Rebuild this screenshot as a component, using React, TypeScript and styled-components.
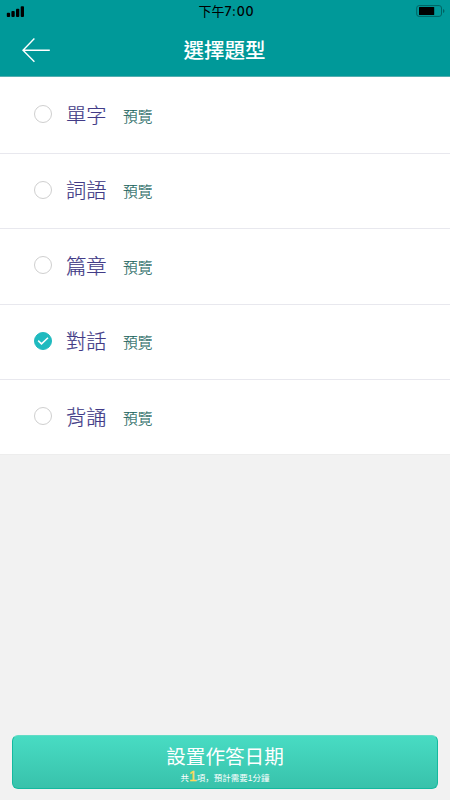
import React, { useState } from "react";
import styled, { createGlobalStyle } from "styled-components";

const GlobalStyle = createGlobalStyle`
  * { box-sizing: border-box; }
  body { margin: 0; background: #f2f2f2; }
  button { font: inherit; border: 0; padding: 0; background: none; cursor: pointer; }
`;

const Screen = styled.main`
  display: flex;
  flex-direction: column;
  height: 800px;
  width: 450px;
  background: #f2f2f2;
  font-family: "Noto Sans CJK TC", sans-serif;
`;

const Header = styled.header`
  flex: none;
  height: 77px;
  background: #009999;
  border-bottom: 1px solid #53aeb0;
`;

const StatusBar = styled.div`
  display: grid;
  grid-template-columns: 1fr auto 1fr;
  align-items: center;
  height: 23px;
  padding: 0 5px 0 6px;
  color: #000;
`;

const Clock = styled.time`
  margin-left: 2px;
  font-size: 13px;
  font-weight: 400;
  line-height: 22px;
  white-space: nowrap;
`;

const Digits = styled.span`
  font-family: "Inter", sans-serif;
  font-size: 12.5px;
  font-weight: 500;
  letter-spacing: 0.8px;
`;

const SignalIcon = styled.svg`
  display: block;
  width: 19px;
  height: 13px;
  margin-bottom: 2px;
`;

const BatteryIcon = styled.svg`
  display: block;
  justify-self: end;
  width: 29px;
  height: 12px;
  margin-bottom: 1px;
`;

const TitleBar = styled.div`
  display: grid;
  grid-template-columns: 60px 1fr 60px;
  align-items: center;
  height: 54px;
`;

const BackButton = styled.button`
  display: block;
  width: 30px;
  height: 26px;
  margin-left: 21px;

  svg { display: block; }
`;

const Title = styled.h1`
  margin: 0 1px 2px 0;
  color: #fff;
  font-size: 20.5px;
  font-weight: 500;
  line-height: 30px;
  text-align: center;
`;

const OptionList = styled.ul`
  flex: none;
  margin: 0;
  padding: 1.2px 0 0;
  background: #fff;
  list-style: none;
`;

const OptionRow = styled.li`
  display: flex;
  align-items: center;
  height: 75.45px;
  padding: 0 0 2px 34px;
  border-bottom: 1px solid #e8e8ee;

  &:last-child { border-bottom-color: #ededed; }
`;

const Radio = styled.button<{ $selected: boolean }>`
  display: grid;
  place-items: center;
  width: 18px;
  height: 18px;
  border-radius: 50%;
  border: 1px solid ${(p) => (p.$selected ? "#1fbabf" : "#cfcfcf")};
  background: ${(p) => (p.$selected ? "#1fbabf" : "#fff")};
`;

const OptionName = styled.span`
  margin: 0 0 1px 14px;
  width: 57px;
  color: #423b87;
  font-size: 20.3px;
  font-weight: 300;
  line-height: 30px;
  -webkit-text-stroke: 0.2px currentColor;
`;

const Preview = styled.button`
  color: #20645d;
  font-size: 14.7px;
  font-weight: 300;
  line-height: 22px;
  margin-top: 3px;
  -webkit-text-stroke: 0.15px currentColor;
`;

const Footer = styled.footer`
  margin-top: auto;
  padding: 0 12px 11px;
`;

const SubmitButton = styled.button`
  display: flex;
  flex-direction: column;
  align-items: center;
  width: 100%;
  height: 54px;
  padding-top: 5px;
  border: 1px solid #14b99f;
  border-top-color: #62dcc5;
  border-radius: 6px;
  background: linear-gradient(#48dcc3, #38c2ab);
  color: #fff;
`;

const SubmitLabel = styled.span`
  font-size: 19.6px;
  line-height: 29px;
`;

const SubmitHint = styled.span`
  display: flex;
  align-items: baseline;
  height: 14px;
  margin-top: -1px;
  font-family: "Liberation Sans", "Noto Sans CJK SC", sans-serif;
  font-size: 8.5px;
  line-height: 14px;
`;

const Count = styled.span`
  color: #ffd958;
  font-size: 14px;
  -webkit-text-stroke: 0.4px currentColor;
`;

const options = ["單字", "詞語", "篇章", "對話", "背誦"];

export default function App() {
  const [selected, setSelected] = useState("對話");

  return (
    <Screen>
      <GlobalStyle />
      <Header>
        <StatusBar>
          <SignalIcon viewBox="0 0 19 13">
            <rect x="0.8" y="8.8" width="3.3" height="4.2" rx="0.9" />
            <rect x="5.4" y="7" width="3.3" height="6" rx="0.9" />
            <rect x="10" y="4.7" width="3.3" height="8.3" rx="0.9" />
            <rect x="14.7" y="2.2" width="3.3" height="10.8" rx="0.9" />
          </SignalIcon>
          <Clock>下午<Digits>7:00</Digits></Clock>
          <BatteryIcon viewBox="0 0 29 12">
            <rect x="0.7" y="0.6" width="24.8" height="10.8" rx="2.4" fill="none" stroke="#006363" strokeWidth="1" />
            <rect x="3" y="2" width="15.2" height="8" rx="0.5" />
            <path d="M27 4 Q28.5 4.4 28.5 6 T27 8 Z" fill="#006363" />
          </BatteryIcon>
        </StatusBar>
        <TitleBar>
          <BackButton aria-label="返回">
            <svg width="30" height="26" viewBox="0 0 30 26" fill="none" stroke="#fff" strokeWidth="1.4">
              <path d="M13.4 1.5 L2 13.2 L13.4 24.8 M2 13.2 H28.8" />
            </svg>
          </BackButton>
          <Title>選擇題型</Title>
        </TitleBar>
      </Header>
      <OptionList>
        {options.map((name) => (
          <OptionRow key={name}>
            <Radio
              role="radio"
              aria-label={name}
              aria-checked={selected === name}
              $selected={selected === name}
              onClick={() => setSelected(name)}
            >
              {selected === name && (
                <svg width="12" height="10" viewBox="0 0 12 10" fill="none" stroke="#fff" strokeWidth="1.5">
                  <path d="M1.2 4.6 L4.5 7.9 L11 1.7" />
                </svg>
              )}
            </Radio>
            <OptionName>{name}</OptionName>
            <Preview>預覽</Preview>
          </OptionRow>
        ))}
      </OptionList>
      <Footer>
        <SubmitButton>
          <SubmitLabel>設置作答日期</SubmitLabel>
          <SubmitHint>
            <span>共</span>
            <Count>1</Count>
            <span>項，預計需要1分鐘</span>
          </SubmitHint>
        </SubmitButton>
      </Footer>
    </Screen>
  );
}
